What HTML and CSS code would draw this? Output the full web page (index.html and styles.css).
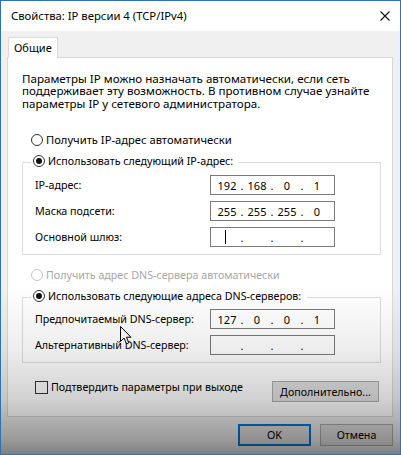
FILE: index.html
```html
<!DOCTYPE html>
<html lang="ru">
<head>
<meta charset="utf-8">
<title>Свойства: IP версии 4 (TCP/IPv4)</title>
<link rel="stylesheet" href="styles.css">
</head>
<body>
<div class="window">
  <div class="titlebar">
    <span class="title">Свойства: IP версии 4 (TCP/IPv4)</span>
    <svg class="close" width="10" height="10" viewBox="0 0 10 10"><path d="M0.5 0.5 L9.5 9.5 M9.5 0.5 L0.5 9.5" stroke="#111" stroke-width="1.1" fill="none"/></svg>
  </div>
  <div class="main">
    <div class="tabs"><div class="tab">Общие</div></div>
    <div class="panel">
      <p class="intro">Параметры IP можно назначать автоматически, если сеть<br>поддерживает эту возможность. В противном случае узнайте<br>параметры IP у сетевого администратора.</p>

      <div class="option opt-auto-ip"><span class="radio"></span><span>Получить IP-адрес автоматически</span></div>

      <div class="group">
        <div class="legend"><span class="radio checked"></span><span>Использовать следующий IP-адрес:</span></div>
        <div class="field-row">
          <span>IP-адрес:</span>
          <div class="ipbox"><span class="oct">192</span><span class="dot">.</span><span class="oct">168</span><span class="dot">.</span><span class="oct">0</span><span class="dot">.</span><span class="oct">1</span></div>
        </div>
        <div class="field-row">
          <span>Маска подсети:</span>
          <div class="ipbox"><span class="oct">255</span><span class="dot">.</span><span class="oct">255</span><span class="dot">.</span><span class="oct">255</span><span class="dot">.</span><span class="oct">0</span></div>
        </div>
        <div class="field-row">
          <span>Основной шлюз:</span>
          <div class="ipbox"><span class="oct"><span class="caret"></span></span><span class="dot">.</span><span class="oct"></span><span class="dot">.</span><span class="oct"></span><span class="dot">.</span><span class="oct"></span></div>
        </div>
      </div>

      <div class="option opt-auto-dns disabled"><span class="radio"></span><span>Получить адрес DNS-сервера автоматически</span></div>

      <div class="group group-dns">
        <div class="legend"><span class="radio checked"></span><span>Использовать следующие адреса DNS-серверов:</span></div>
        <div class="field-row">
          <span>Предпочитаемый DNS-сервер:</span>
          <div class="ipbox"><span class="oct">127</span><span class="dot">.</span><span class="oct">0</span><span class="dot">.</span><span class="oct">0</span><span class="dot">.</span><span class="oct">1</span></div>
        </div>
        <div class="field-row">
          <span>Альтернативный DNS-сервер:</span>
          <div class="ipbox"><span class="oct"></span><span class="dot">.</span><span class="oct"></span><span class="dot">.</span><span class="oct"></span><span class="dot">.</span><span class="oct"></span></div>
        </div>
      </div>

      <div class="bottom-row">
        <div class="check-option"><span class="checkbox"></span><span>Подтвердить параметры при выходе</span></div>
        <button class="btn btn-adv">Дополнительно...</button>
      </div>
    </div>
    <div class="actions">
      <button class="btn btn-ok">OK</button>
      <button class="btn btn-cancel">Отмена</button>
    </div>
  </div>
  <svg class="cursor" width="12" height="19" viewBox="0 0 12 19"><path d="M0.5 0.5 L0.5 15.5 L4 12 L6.5 17.8 L8.8 16.8 L6.4 11.2 L11 11.2 Z" fill="#fff" stroke="#000" stroke-width="1" stroke-linejoin="miter"/></svg>
</div>
</body>
</html>
```

FILE: styles.css
```css
* { box-sizing: border-box; }
html, body { margin: 0; padding: 0; }
body {
  width: 401px;
  height: 455px;
  overflow: hidden;
  font-family: "Noto Sans", "Open Sans", sans-serif;
  font-size: 10.7px;
  color: #000;
}
.window {
  position: relative;
  width: 401px;
  height: 455px;
  background: #f0f0f0;
  border: 1px solid #2f72ad;
  border-top: none;
  display: flex;
  flex-direction: column;
}
.window::after {
  content: "";
  position: absolute;
  inset: 0;
  pointer-events: none;
  background: linear-gradient(to bottom,
    rgba(0,0,0,0) 63%,
    rgba(0,0,0,0.07) 77%,
    rgba(0,0,0,0.18) 88%,
    rgba(0,0,0,0.36) 97%,
    rgba(0,0,0,0.47) 100%);
}
.titlebar {
  height: 31px;
  background: #fff;
  display: flex;
  align-items: center;
  justify-content: space-between;
  padding: 0 10px 0 10px;
  border-top: 1px solid #2f72ad;
}
.title { font-size: 11.3px; line-height: 16px; }
.close { display: block; }
.main {
  padding: 6px 7px 0 6px;
  display: flex;
  flex-direction: column;
}
.tabs { display: flex; padding-left: 1px; }
.tab {
  position: relative;
  z-index: 1;
  width: 50px;
  height: 21px;
  background: #fff;
  border: 1px solid #d9d9d9;
  border-bottom: none;
  margin-bottom: -1px;
  padding-left: 5px;
  font-size: 11px;
  line-height: 20px;
}
.panel {
  background: #fff;
  border: 1px solid #d9d9d9;
  padding: 15px 11px 14px 14px;
  display: flex;
  flex-direction: column;
}
.intro {
  margin: 0;
  font-size: 11.6px;
  line-height: 12.4px;
  white-space: nowrap;
}
.option, .legend {
  display: flex;
  align-items: center;
  gap: 3px;
  height: 14px;
  line-height: 14px;
  white-space: nowrap;
}
.option { padding-left: 9px; }
.opt-auto-ip { margin-top: 23px; font-size: 11.2px; }
.opt-auto-dns { margin-top: 13px; }
.disabled { color: #a6a6a6; }
.disabled .radio { border-color: #c4c4c4; }
.radio {
  width: 12px;
  height: 12px;
  border: 1px solid #333;
  border-radius: 50%;
  display: inline-flex;
  align-items: center;
  justify-content: center;
  flex: none;
}
.radio.checked::before {
  content: "";
  width: 6px;
  height: 6px;
  border-radius: 50%;
  background: #111;
}
.group {
  margin-top: 15px;
  border: 1px solid #dcdcdc;
  padding: 0 45px 7px 12px;
  display: flex;
  flex-direction: column;
  gap: 6px;
}
.legend {
  margin: -9px 0 1px -4px;
  padding: 0 6px 0 2px;
  background: #fff;
  width: fit-content;
}
.group-dns .legend { margin-bottom: 0; }
.field-row {
  display: flex;
  align-items: center;
  justify-content: space-between;
  height: 20px;
  white-space: nowrap;
}
.ipbox {
  flex: none;
  width: 125px;
  height: 20px;
  border: 1px solid #7a7a7a;
  background: #fff;
  display: flex;
  align-items: center;
  padding-left: 4px;
  font-size: 11px;
}
.oct {
  width: 24px;
  text-align: center;
  display: flex;
  justify-content: center;
  align-items: center;
  height: 18px;
}
.dot {
  width: 6px;
  text-align: center;
}
.caret {
  width: 1px;
  height: 14px;
  background: #000;
  margin-left: -3px;
}
.bottom-row {
  margin-top: 18px;
  display: flex;
  justify-content: space-between;
  align-items: flex-start;
  padding: 0 2px 0 13px;
}
.check-option {
  display: flex;
  align-items: center;
  gap: 3px;
  height: 14px;
  margin-top: -1px;
  white-space: nowrap;
}
.checkbox {
  width: 13px;
  height: 13px;
  border: 1px solid #333;
  background: #fff;
  flex: none;
}
.btn {
  font-family: "Noto Sans", "Open Sans", sans-serif;
  font-size: 10.7px;
  color: #000;
  background: #e1e1e1;
  border: 1px solid #adadad;
  padding: 0;
  margin: 0;
  height: 21px;
}
.btn-adv { width: 107px; }
.actions {
  display: flex;
  justify-content: flex-end;
  gap: 9px;
  margin-top: 7px;
}
.btn-ok, .btn-cancel { width: 73px; height: 22px; }
.btn-ok { border: 2px solid #0078d7; }
.cursor {
  position: absolute;
  left: 119px;
  top: 326px;
}
```
